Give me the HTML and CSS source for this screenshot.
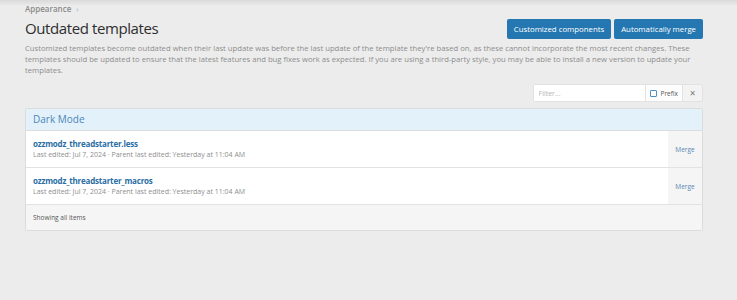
FILE: index.html
```html
<!DOCTYPE html>
<html lang="en">
<head>
  <meta charset="UTF-8" />
  <title>Outdated templates</title>
  <link rel="stylesheet" href="styles.css">
</head>
<body>
  <div class="page">
    <div class="breadcrumb">Appearance <span class="chev">&rsaquo;</span></div>

    <div class="title-row">
      <h1>Outdated templates</h1>
      <div class="actions">
        <a class="button" href="#">Customized components</a>
        <a class="button" href="#">Automatically merge</a>
      </div>
    </div>

    <p class="explain">Customized templates become outdated when their last update was before the last update of the template they're based on, as these cannot incorporate the most recent changes. These templates should be updated to ensure that the latest features and bug fixes work as expected. If you are using a third-party style, you may be able to install a new version to update your templates.</p>

    <div class="filter-row">
      <div class="filter">
        <input class="filter-input" type="text" placeholder="Filter...">
        <label class="filter-prefix"><span class="box"></span>Prefix</label>
        <span class="filter-clear">&times;</span>
      </div>
    </div>

    <div class="block">
      <h2 class="block-header">Dark Mode</h2>
      <div class="row">
        <div class="row-main">
          <a class="row-title" href="#">ozzmodz_threadstarter.less</a>
          <div class="row-hint">Last edited: Jul 7, 2024 &middot; Parent last edited: Yesterday at 11:04 AM</div>
        </div>
        <a class="row-action" href="#">Merge</a>
      </div>
      <div class="row">
        <div class="row-main">
          <a class="row-title" href="#">ozzmodz_threadstarter_macros</a>
          <div class="row-hint">Last edited: Jul 7, 2024 &middot; Parent last edited: Yesterday at 11:04 AM</div>
        </div>
        <a class="row-action" href="#">Merge</a>
      </div>
      <div class="block-footer">Showing all items</div>
    </div>
  </div>
</body>
</html>
```

FILE: styles.css
```css
html {
  background: #ececec;
}

body {
  margin: 0;
  min-height: 300px;
  font-family: "Open Sans", "Noto Sans", sans-serif;
  background: linear-gradient(#d9d9d9, #ececec 6px) no-repeat;
  color: #333;
}

.page {
  padding: 3px 34px 0 25px;
}

.breadcrumb {
  font-size: 8px;
  font-weight: 600;
  color: #8a8a8a;
  line-height: 12px;
}

.breadcrumb .chev {
  margin-left: 3px;
  font-weight: 400;
  color: #aaa;
}

.title-row {
  display: flex;
  justify-content: space-between;
  align-items: flex-end;
  margin-top: 1px;
}

h1 {
  margin: 0;
  font-size: 15px;
  font-weight: 400;
  letter-spacing: -0.4px;
  line-height: 24px;
  color: #2e2e2e;
}

.actions {
  display: flex;
  gap: 3px;
  margin-bottom: 1px;
}

.button {
  display: inline-block;
  background: #2577b1;
  color: #fff;
  font-size: 7.8px;
  line-height: 20px;
  padding: 0 7px;
  border-radius: 2px;
  text-decoration: none;
}

.explain {
  margin: 3px 0 0;
  font-size: 7.7px;
  line-height: 11px;
  color: #8d8d8d;
}

.filter-row {
  display: flex;
  justify-content: flex-end;
  margin-top: 8px;
}

.filter {
  display: flex;
  height: 16px;
  border: 1px solid #e2e2e2;
  border-radius: 2px;
  background: #f3f3f3;
  font-size: 7px;
}

.filter-input {
  width: 101px;
  border: 0;
  padding: 0 5px;
  background: #fff;
  font: inherit;
  outline: none;
}

.filter-input::placeholder {
  color: #b5b5b5;
}

.filter-prefix {
  display: flex;
  align-items: center;
  gap: 4px;
  padding: 0 4px 0 4px;
  background: #fdfdfd;
  border-left: 1px solid #e2e2e2;
  color: #555;
  font-size: 6.5px;
}

.filter-prefix .box {
  width: 5px;
  height: 5px;
  border: 1px solid #4a8fc8;
  border-radius: 1px;
}

.filter-clear {
  width: 19px;
  text-align: center;
  line-height: 16px;
  font-size: 10px;
  color: #777;
  border-left: 1px solid #e2e2e2;
}

.block {
  margin-top: 6px;
  background: #fff;
  border: 1px solid #dcdcdc;
  border-radius: 2px;
}

.block-header {
  margin: 0;
  padding: 0 7px;
  font-size: 10px;
  font-weight: 400;
  line-height: 21px;
  color: #4a86b8;
  background: #e3f1fb;
  border-bottom: 1px solid #dcdcdc;
}

.row {
  display: flex;
  border-bottom: 1px solid #e2e2e2;
}

.row-main {
  flex: 1;
  padding: 6px 7px 7px;
}

.row-title {
  display: block;
  font-size: 8px;
  font-weight: 700;
  letter-spacing: -0.2px;
  line-height: 13px;
  color: #2a6ea5;
  text-decoration: none;
}

.row-hint {
  font-size: 7px;
  line-height: 10px;
  color: #8e8e8e;
}

.row-action {
  display: flex;
  align-items: center;
  justify-content: center;
  width: 34px;
  background: #f5f5f5;
  font-size: 6.5px;
  color: #5a88b2;
  text-decoration: none;
}

.block-footer {
  padding: 0 7px;
  line-height: 25px;
  font-size: 6.5px;
  color: #555;
  background: #f5f5f5;
}
```
